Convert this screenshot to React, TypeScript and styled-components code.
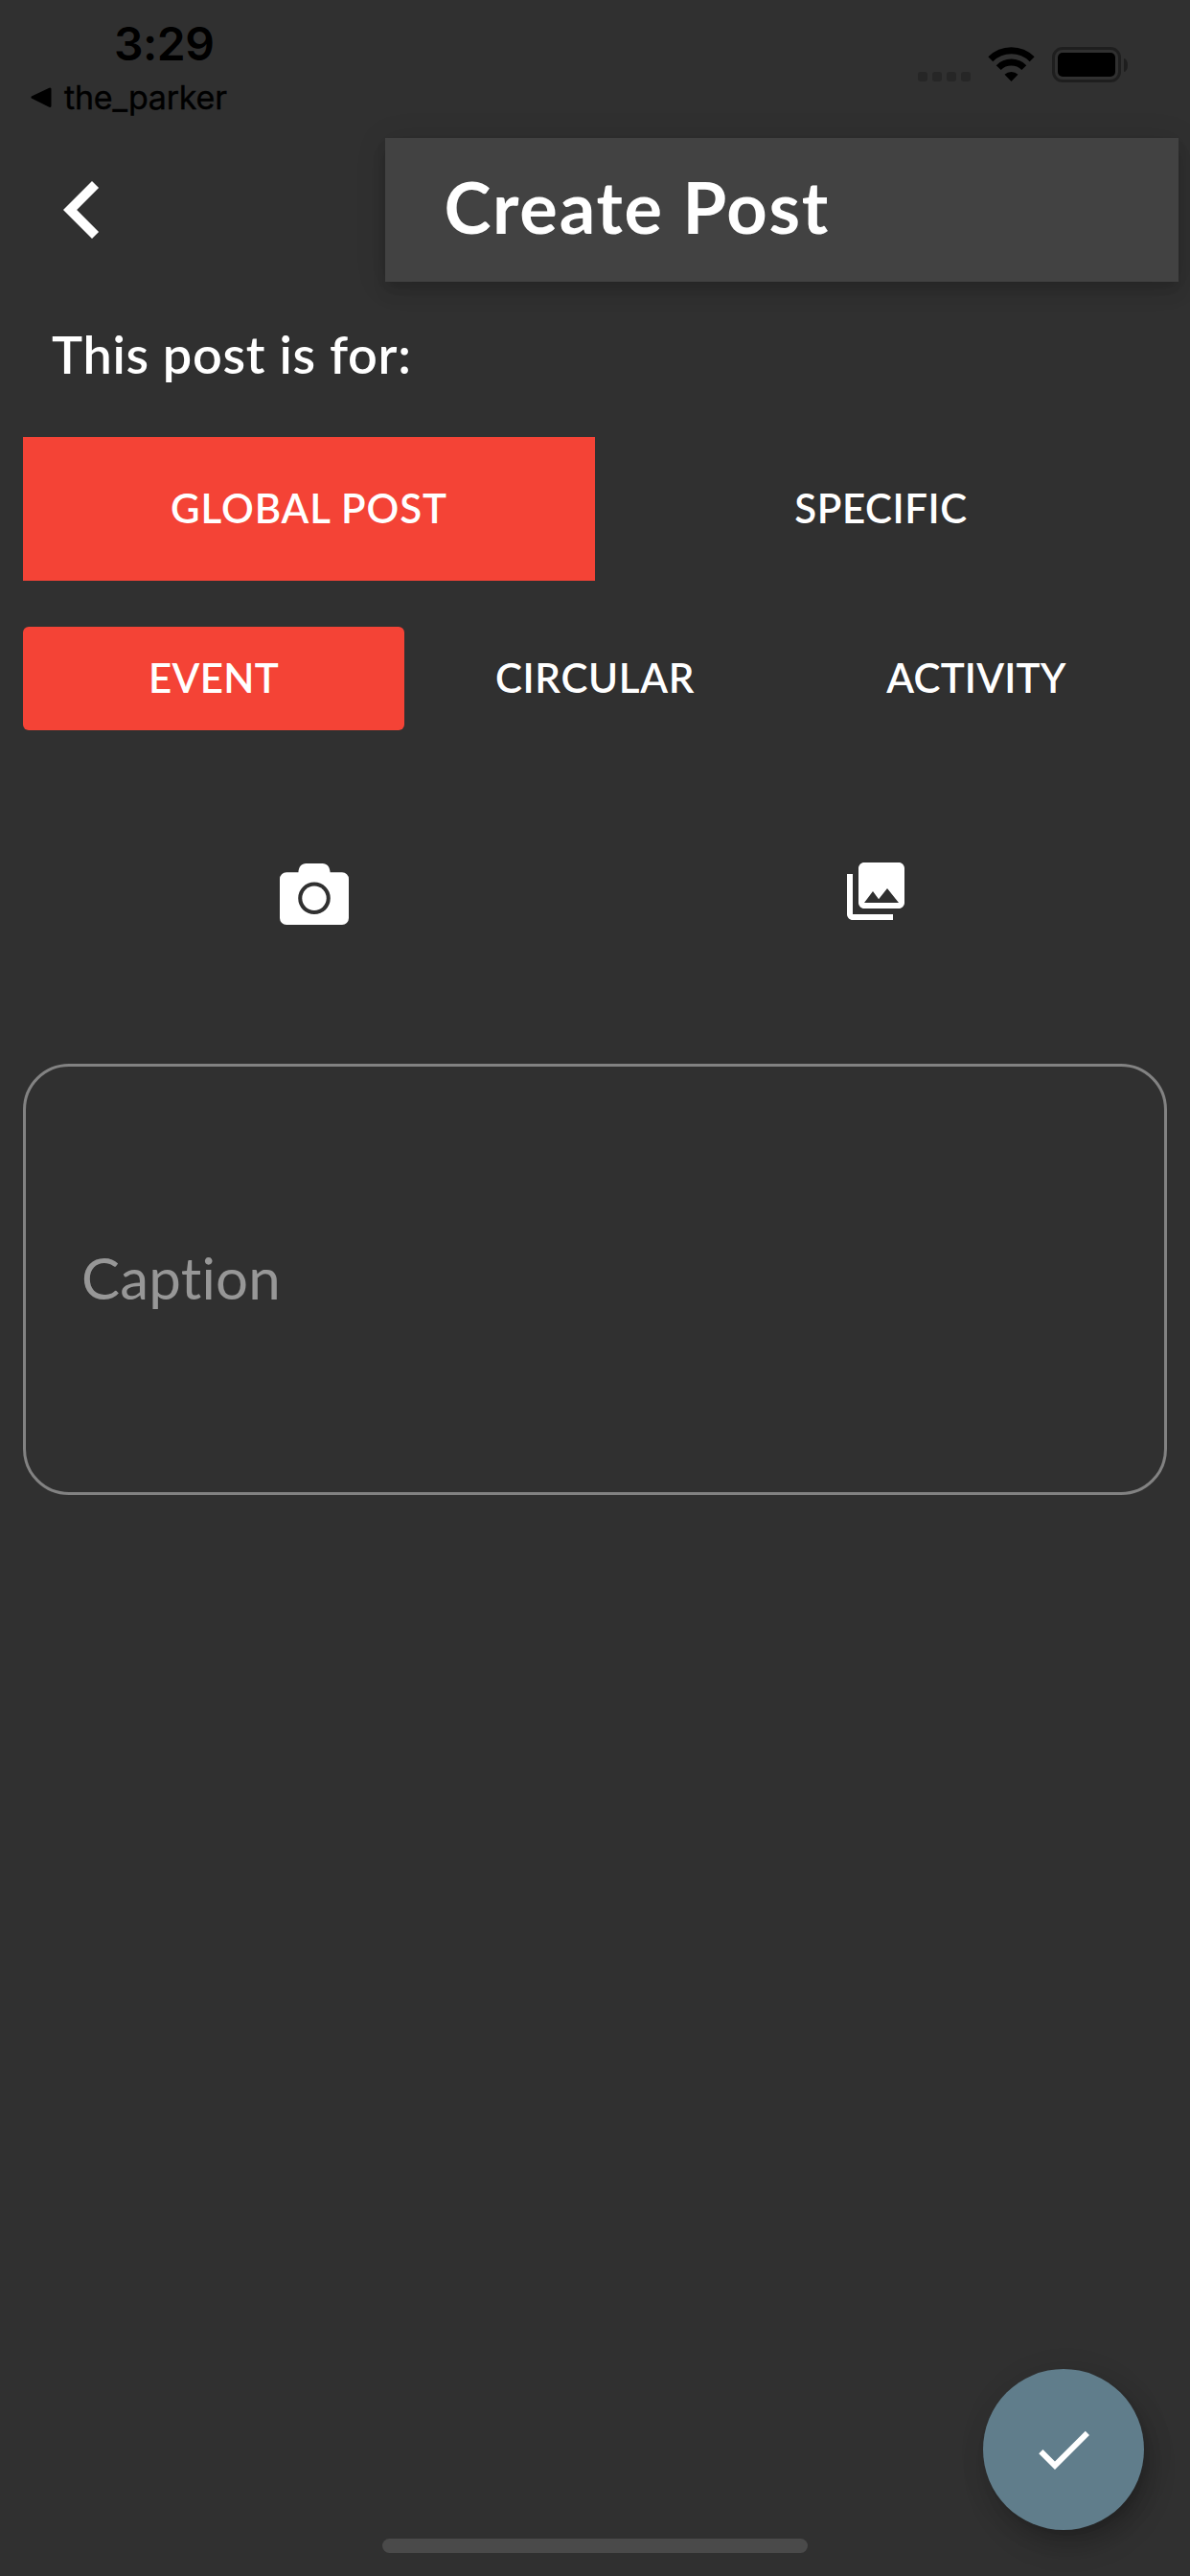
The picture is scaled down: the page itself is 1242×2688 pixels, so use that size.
import React, { useState } from 'react';
import styled, { createGlobalStyle } from 'styled-components';
import { MdCheck, MdChevronLeft, MdPhotoLibrary } from 'react-icons/md';

const GlobalStyle = createGlobalStyle`
  * { box-sizing: border-box; }
  body { margin: 0; background: #303030; }
  button { border: 0; padding: 0; background: none; color: inherit; font: inherit; cursor: pointer; }
`;

const Screen = styled.div`
  position: relative;
  display: flex;
  flex-direction: column;
  width: 1242px;
  height: 2688px;
  overflow: hidden;
  background: #303030;
  color: #fff;
  font-family: Lato, 'Open Sans', sans-serif;
  font-variant-ligatures: none;
`;

const StatusBar = styled.div`
  display: flex;
  justify-content: space-between;
  height: 144px;
  padding: 22px 65px 0 32px;
  color: #000;
  font-family: Inter, 'Liberation Sans', sans-serif;
`;

const StatusLeft = styled.div`
  display: flex;
  flex-direction: column;
  gap: 12px;
`;

const Clock = styled.div`
  padding-left: 87px;
  font-size: 48px;
  font-weight: 600;
  line-height: 48px;
  letter-spacing: -0.5px;
`;

const BackToApp = styled.div`
  display: flex;
  align-items: center;
  gap: 13px;
  font-size: 34px;
  line-height: 40px;
  letter-spacing: -0.2px;
  -webkit-text-stroke: 0.4px #000;
`;

const StatusRight = styled.div`
  display: flex;
  align-items: flex-end;
  height: 64px;
`;

const SignalDots = styled.div`
  display: flex;
  gap: 5px;
  margin: 0 18px 1px 0;
`;

const Dot = styled.span`
  width: 10px;
  height: 10px;
  border-radius: 3px;
  background: #262626;
`;

const WifiIcon = styled.svg`
  margin: 0 18px 1px 0;
`;

const Battery = styled.div`
  display: flex;
  align-items: center;
  gap: 3px;
`;

const BatteryBody = styled.div`
  width: 72px;
  height: 37px;
  padding: 3px;
  border: 3px solid #1e1e1e;
  border-radius: 11px;
`;

const BatteryLevel = styled.div`
  height: 100%;
  border-radius: 5px;
  background: #000;
`;

const BatteryCap = styled.div`
  width: 4px;
  height: 14px;
  border-radius: 0 4px 4px 0 / 0 7px 7px 0;
  background: #1e1e1e;
`;

const Header = styled.header`
  display: flex;
  align-items: center;
  justify-content: space-between;
  height: 150px;
  padding: 0 12px 0 26px;
`;

const BackButton = styled.button`
  display: flex;
  font-size: 120px;
`;

const TitleCard = styled.div`
  display: flex;
  align-items: center;
  width: 828px;
  height: 150px;
  padding: 0 0 7px 61.5px;
  background: #424242;
  box-shadow: 0 6px 12px -3px rgba(0, 0, 0, 0.1), 0 12px 15px rgba(0, 0, 0, 0.07),
    0 3px 30px rgba(0, 0, 0, 0.12);
`;

const Title = styled.h1`
  margin: 0;
  font-size: 74px;
  font-weight: 700;
  line-height: 90px;
  letter-spacing: 1.75px;
`;

const Prompt = styled.p`
  margin: 46px 0 0 54px;
  font-size: 54px;
  font-weight: 600;
  line-height: 60px;
  letter-spacing: 0.7px;
`;

const Options = styled.div<{ $top: number }>`
  display: flex;
  margin: ${(p) => p.$top}px 24px 0;
`;

const Option = styled.button<{ $active: boolean; $height: number; $radius: number; $tracking: number }>`
  flex: 1;
  height: ${(p) => p.$height}px;
  padding-bottom: 3px;
  border-radius: ${(p) => p.$radius}px;
  background: ${(p) => (p.$active ? '#f44336' : 'transparent')};
  font-size: 42px;
  font-weight: 600;
  line-height: 50px;
  letter-spacing: ${(p) => p.$tracking}px;
`;

const MediaRow = styled.div`
  display: flex;
  align-items: center;
  justify-content: space-between;
  height: 72px;
  margin: 132px 292px 0;
`;

const MediaButton = styled.button`
  display: flex;
  font-size: 72px;
`;

const CameraButton = styled(MediaButton)`
  padding-top: 6px;
`;

const CaptionField = styled.label`
  display: flex;
  height: 450px;
  margin: 144px 24px 0;
  padding: 0 57px 5px 58px;
  border: 3px solid #828282;
  border-radius: 48px;
`;

const CaptionInput = styled.input`
  width: 100%;
  padding: 0;
  border: 0;
  outline: 0;
  background: none;
  color: #fff;
  font: 400 60px Lato, 'Open Sans', sans-serif;
  font-variant-ligatures: none;
  letter-spacing: 0.2px;
  &::placeholder {
    color: #979797;
    opacity: 1;
  }
`;

const Fab = styled.button`
  position: absolute;
  right: 48px;
  bottom: 48px;
  display: flex;
  align-items: center;
  justify-content: center;
  width: 168px;
  height: 168px;
  border-radius: 50%;
  background: #607d8b;
  font-size: 72px;
  box-shadow: 6px 9px 15px -3px rgba(0, 0, 0, 0.15), 6px 18px 30px rgba(0, 0, 0, 0.14),
    3px 3px 36px rgba(0, 0, 0, 0.06);
`;

const HomeIndicator = styled.div`
  width: 444px;
  height: 15px;
  margin: auto auto 24px;
  border-radius: 8px;
  background: #4a4a4a;
`;

const audiences = [
  { label: 'GLOBAL POST', tracking: 0.9 },
  { label: 'SPECIFIC', tracking: 0.6 },
];

const kinds = [
  { label: 'EVENT', tracking: 0.3 },
  { label: 'CIRCULAR', tracking: 0.7 },
  { label: 'ACTIVITY', tracking: 0.2 },
];

export default function App() {
  const [audience, setAudience] = useState('GLOBAL POST');
  const [kind, setKind] = useState('EVENT');

  return (
    <>
      <GlobalStyle />
      <Screen>
        <StatusBar>
          <StatusLeft>
            <Clock>3:29</Clock>
            <BackToApp>
              <svg width="22" height="22" viewBox="0 0 22 22">
                <path d="M2 10.5 20 2v17.5z" fill="#000" stroke="#000" strokeWidth="3" strokeLinejoin="round" />
              </svg>
              <span>the_parker</span>
            </BackToApp>
          </StatusLeft>
          <StatusRight>
            <SignalDots>
              <Dot />
              <Dot />
              <Dot />
              <Dot />
            </SignalDots>
            <WifiIcon width="49" height="36" viewBox="0 0 49 36">
              <path d="M2.8 12.8a30.7 30.7 0 0 1 43.4 0" fill="none" stroke="#000" strokeWidth="7" />
              <path d="M11.2 21.6a18.8 18.8 0 0 1 26.6 0" fill="none" stroke="#000" strokeWidth="7" />
              <path d="M24.5 36l-7-7.2a10 10 0 0 1 14 0z" fill="#000" />
            </WifiIcon>
            <Battery>
              <BatteryBody>
                <BatteryLevel />
              </BatteryBody>
              <BatteryCap />
            </Battery>
          </StatusRight>
        </StatusBar>

        <Header>
          <BackButton aria-label="Back">
            <MdChevronLeft />
          </BackButton>
          <TitleCard>
            <Title>Create Post</Title>
          </TitleCard>
        </Header>

        <Prompt>This post is for:</Prompt>

        <Options $top={56}>
          {audiences.map(({ label, tracking }) => (
            <Option
              key={label}
              $active={label === audience}
              $height={150}
              $radius={0}
              $tracking={tracking}
              onClick={() => setAudience(label)}
            >
              {label}
            </Option>
          ))}
        </Options>

        <Options $top={48}>
          {kinds.map(({ label, tracking }) => (
            <Option
              key={label}
              $active={label === kind}
              $height={108}
              $radius={6}
              $tracking={tracking}
              onClick={() => setKind(label)}
            >
              {label}
            </Option>
          ))}
        </Options>

        <MediaRow>
          <CameraButton aria-label="Take a photo">
            <svg width="72" height="64" viewBox="0 0 72 64" fill="#fff">
              <path
                fillRule="evenodd"
                d="M7 9.3h12.4C19.8 3.6 22.5 0 27.5 0H44.5C49.5 0 52.2 3.6 52.6 9.3H65a7 7 0 0 1 7 7V57a7 7 0 0 1-7 7H7a7 7 0 0 1-7-7V16.3a7 7 0 0 1 7-7zM36 19.5a16.8 16.8 0 1 0 0 33.6 16.8 16.8 0 0 0 0-33.6z"
              />
              <circle cx="36" cy="36.3" r="12.7" />
            </svg>
          </CameraButton>
          <MediaButton aria-label="Choose from gallery">
            <MdPhotoLibrary />
          </MediaButton>
        </MediaRow>

        <CaptionField>
          <CaptionInput placeholder="Caption" />
        </CaptionField>

        <HomeIndicator />
        <Fab aria-label="Publish">
          <MdCheck />
        </Fab>
      </Screen>
    </>
  );
}
